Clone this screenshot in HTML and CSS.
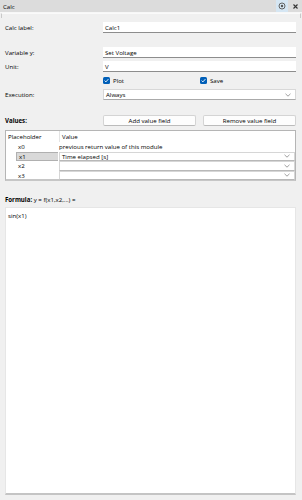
FILE: index.html
```html
<!DOCTYPE html>
<html>
<head>
<meta charset="utf-8">
<link rel="stylesheet" href="styles.css">
</head>
<body>
<div class="titlebar">
  <span class="title">Calc</span>
  <span class="tbtns">
    <span class="tbtn float"><svg width="8" height="8" viewBox="0 0 8 8"><circle cx="4" cy="4" r="3" fill="none" stroke="#555" stroke-width="0.9"/><circle cx="4" cy="4" r="1.2" fill="#555"/></svg></span>
    <span class="tbtn close"><svg width="7" height="7" viewBox="0 0 7 7"><path d="M1.5 1.5L5.5 5.5M5.5 1.5L1.5 5.5" stroke="#333" stroke-width="1.1"/></svg></span>
  </span>
</div>
<div class="frame"></div>
<div class="panel">
  <div class="row r-label">
    <span class="lbl">Calc label:</span>
    <div class="field">Calc1</div>
  </div>
  <div class="row r-var">
    <span class="lbl">Variable y:</span>
    <div class="field">Set Voltage</div>
  </div>
  <div class="row r-unit">
    <span class="lbl">Unit:</span>
    <div class="field">V</div>
  </div>
  <div class="row r-checks">
    <span class="lbl"></span>
    <div class="checks">
      <label class="chk"><span class="box"><svg width="7" height="7" viewBox="0 0 7 7"><path d="M1.6 3.6L2.9 4.9L5.4 2.1" fill="none" stroke="#fff" stroke-width="0.9"/></svg></span>Plot</label>
      <label class="chk"><span class="box"><svg width="7" height="7" viewBox="0 0 7 7"><path d="M1.6 3.6L2.9 4.9L5.4 2.1" fill="none" stroke="#fff" stroke-width="0.9"/></svg></span>Save</label>
    </div>
  </div>
  <div class="row r-exec">
    <span class="lbl">Execution:</span>
    <div class="field select">Always<svg class="chev" width="6" height="4" viewBox="0 0 6 4"><path d="M0.5 0.8L3 3.2L5.5 0.8" fill="none" stroke="#888" stroke-width="0.8"/></svg></div>
  </div>
  <div class="row r-values">
    <span class="lbl bold">Values:</span>
    <div class="btns">
      <div class="btn">Add value field</div>
      <div class="btn">Remove value field</div>
    </div>
  </div>
  <div class="table">
    <div class="trow thead">
      <div class="c1">Placeholder</div>
      <div class="c2">Value</div>
    </div>
    <div class="trow">
      <div class="c1 ph">x0</div>
      <div class="c2 plain">previous return value of this module</div>
    </div>
    <div class="trow">
      <div class="c1 ph sel">x1</div>
      <div class="c2 combo">Time elapsed [s]<svg class="chev" width="6" height="4" viewBox="0 0 6 4"><path d="M0.5 0.8L3 3.2L5.5 0.8" fill="none" stroke="#888" stroke-width="0.8"/></svg></div>
    </div>
    <div class="trow">
      <div class="c1 ph">x2</div>
      <div class="c2 combo"><svg class="chev" width="6" height="4" viewBox="0 0 6 4"><path d="M0.5 0.8L3 3.2L5.5 0.8" fill="none" stroke="#888" stroke-width="0.8"/></svg></div>
    </div>
    <div class="trow">
      <div class="c1 ph">x3</div>
      <div class="c2 combo"><svg class="chev" width="6" height="4" viewBox="0 0 6 4"><path d="M0.5 0.8L3 3.2L5.5 0.8" fill="none" stroke="#888" stroke-width="0.8"/></svg></div>
    </div>
  </div>
  <div class="formula"><b>Formula:</b> y = f(x1,x2,...) =</div>
  <div class="textarea">sin(x1)</div>
</div>
</body>
</html>
```
FILE: styles.css
```css
html, body {
  margin: 0;
  padding: 0;
}
body {
  width: 302px;
  height: 500px;
  background: #f0f0f0;
  font-family: "Open Sans", "Noto Sans", sans-serif;
  font-size: 6.1px;
  color: #000;
  overflow: hidden;
}
.titlebar {
  height: 12px;
  background: #dcdcdc;
  display: flex;
  align-items: center;
  justify-content: space-between;
  border-bottom: 1px solid #f7f7f7;
}
.title {
  padding-left: 3px;
}
.tbtns {
  display: flex;
  align-items: center;
  height: 12px;
}
.tbtn {
  display: flex;
  align-items: center;
  justify-content: center;
  height: 12px;
}
.float {
  width: 12px;
  background: #d5e6f3;
  margin-right: 2px;
}
.close {
  width: 10px;
  margin-right: 2px;
}
.frame {
  height: 4px;
  margin: 0 1px;
  border: 1px solid #c9c9c9;
  border-bottom: none;
  border-top-color: #fafafa;
}
.panel {
  padding: 0 6px 0 5px;
}
.row {
  display: flex;
  align-items: center;
}
.lbl {
  width: 98px;
  flex: none;
}
.bold { font-weight: bold; }
.field {
  flex: 1;
  height: 10px;
  background: #fff;
  border-bottom: 1px solid #8d8d8d;
  display: flex;
  align-items: center;
  padding-left: 2px;
  box-sizing: content-box;
}
.r-label { margin-top: 4px; }
.r-var { margin-top: 14px; }
.r-unit { margin-top: 3px; }
.r-checks { margin-top: 4px; height: 9px; }
.r-exec { margin-top: 4px; }
.select {
  border: 1px solid #d8d8d8;
  border-bottom: 1px solid #aaa;
  height: 9px;
  position: relative;
}
.chev {
  position: absolute;
  right: 4px;
  top: 50%;
  margin-top: -2px;
}
.checks {
  display: flex;
  flex: 1;
}
.chk {
  display: flex;
  align-items: center;
  width: 97px;
}
.box {
  width: 7px;
  height: 7px;
  background: #005fb8;
  border-radius: 1.5px;
  margin-right: 3px;
  display: flex;
}
.r-values { margin-top: 15px; }
.btns {
  flex: 1;
  display: flex;
  gap: 7px;
}
.btn {
  flex: 1;
  height: 9px;
  background: #fdfdfd;
  border: 1px solid #d4d4d4;
  border-bottom-color: #bbb;
  border-radius: 2px;
  display: flex;
  align-items: center;
  justify-content: center;
}
.table {
  margin-top: 4px;
  background: #fff;
  border: 1px solid #b5b5b5;
  border-bottom: 2px solid #c6c6c6;
  height: 48px;
}
.trow {
  display: flex;
  height: 9.5px;
  align-items: stretch;
}
.thead {
  height: 11px;
}
.thead .c1 {
  border-right: 1px solid #e4e4e4;
  padding-left: 2px;
  width: 51px;
}
.thead .c2 { padding-left: 2px; }
.c1, .c2 {
  display: flex;
  align-items: center;
}
.c1 {
  width: 53px;
  flex: none;
}
.ph {
  margin-left: 10px;
  width: 42px;
  padding-left: 2px;
  box-sizing: border-box;
}
.sel {
  background: #d9d9d9;
  border: 1px solid #b0b0b0;
  border-right: none;
}
.c2 {
  flex: 1;
  padding-left: 1px;
}
.combo {
  position: relative;
  border: 1px solid #d6d6d6;
  border-bottom-color: #b8b8b8;
  margin-left: 1px;
  padding-left: 2px;
}
.formula {
  margin-top: 14px;
}
.textarea {
  margin-top: 3px;
  height: 288px;
  background: #fff;
  border: 1px solid #e6e6e6;
  border-bottom: 2px solid #c4c4c4;
  padding: 3px 2px;
  box-sizing: border-box;
}
```
